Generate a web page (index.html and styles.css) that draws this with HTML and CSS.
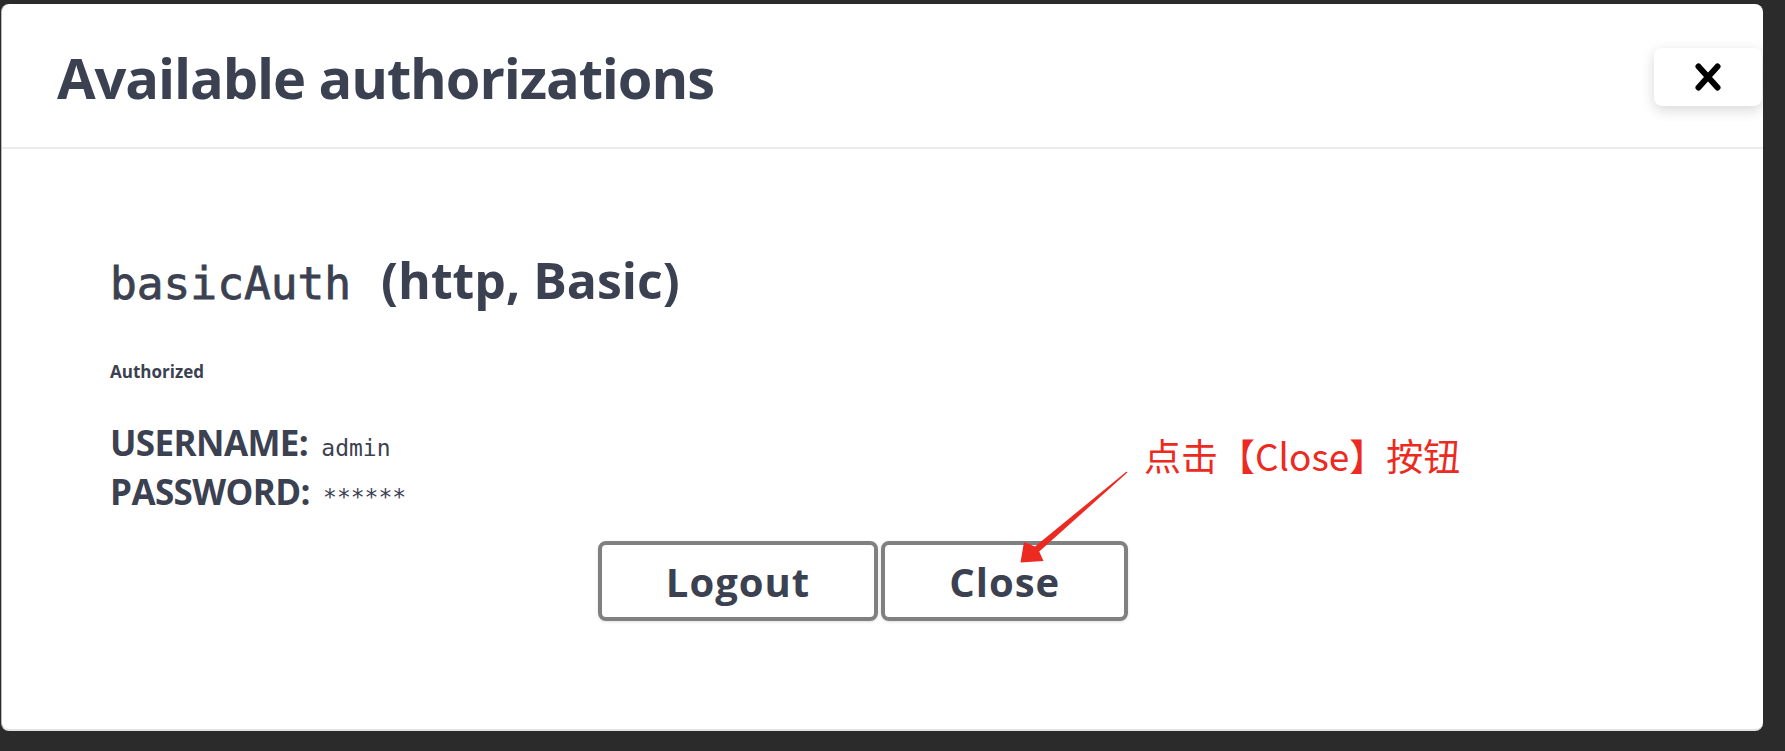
FILE: index.html
```html
<!DOCTYPE html>
<html lang="zh-CN">
<head>
<meta charset="utf-8">
<title>Available authorizations</title>
<link rel="stylesheet" href="styles.css">
</head>
<body>
<div class="backdrop">
  <div class="modal">
    <div class="modal-header">
      <h3 class="modal-title">Available authorizations</h3>
      <button class="close-x" type="button" aria-label="Close">
        <svg width="28" height="30" viewBox="0 0 28 30">
          <path d="M4.5 4.5 L23.5 25.5 M23.5 4.5 L4.5 25.5" stroke="#000" stroke-width="6" stroke-linecap="round" fill="none"/>
        </svg>
      </button>
    </div>
    <div class="modal-body">
      <h4 class="auth-title"><code class="scheme">basicAuth</code> (http, Basic)</h4>
      <h6 class="status">Authorized</h6>
      <div class="cred-row"><span class="label">USERNAME:</span> <code class="value">admin</code></div>
      <div class="cred-row"><span class="label">PASSWORD:</span> <code class="value">******</code></div>
      <div class="btn-wrapper">
        <button class="btn" type="button">Logout</button>
        <button class="btn" type="button">Close</button>
      </div>
    </div>
    <div class="note">点击【Close】按钮</div>
    <svg class="arrow" width="150" height="120" viewBox="1000 460 150 120">
      <polygon fill="#ec2a22" points="1126.4,472.6 1038.2,551.6 1042.5,561 1019.5,562.5 1023,542 1034,546.6 1125.6,471.4"/>
    </svg>
  </div>
</div>
</body>
</html>
```

FILE: styles.css
```css
* {
  box-sizing: border-box;
}

html, body {
  margin: 0;
  padding: 0;
  background: #2b2b2b;
}

body {
  font-family: "Open Sans", "Noto Sans", sans-serif;
  color: #3b4151;
}

.backdrop {
  padding: 4px 22px 20px 1px;
}

.modal {
  position: relative;
  width: 1762px;
  height: 727px;
  background: #fff;
  border-radius: 8px;
  border-left: 1px solid #b8b8b8;
  border-bottom: 2px solid #e2e2e2;
  overflow: hidden;
}

.modal-header {
  display: flex;
  justify-content: space-between;
  align-items: flex-start;
  height: 145px;
  padding: 44px 1px 0 55px;
  border-bottom: 2px solid #ebebeb;
}

.modal-title {
  margin: 0;
  font-size: 56px;
  line-height: 58px;
  font-weight: 700;
  letter-spacing: -1.1px;
  color: #3b4151;
}

.close-x {
  width: 108px;
  height: 58px;
  border: none;
  border-radius: 8px;
  background: #fff;
  box-shadow: 0 4px 14px rgba(0, 0, 0, 0.16);
  display: flex;
  align-items: center;
  justify-content: center;
  padding: 0;
}

.modal-body {
  padding: 0 0 0 108px;
}

.auth-title {
  margin: 101px 0 0;
  font-size: 50px;
  line-height: 60px;
  font-weight: 700;
  white-space: nowrap;
}

.scheme {
  font-family: "DejaVu Sans Mono", "Liberation Mono", monospace;
  font-size: 44.5px;
  line-height: 1;
  font-weight: 400;
  -webkit-text-stroke: 0.8px #3b4151;
  margin-right: 17px;
}

.status {
  margin: 50px 0 0;
  font-size: 17px;
  line-height: 24px;
  font-weight: 700;
}

.cred-row {
  font-size: 35px;
  line-height: 49px;
  font-weight: 700;
  white-space: nowrap;
}

.status + .cred-row {
  margin-top: 34px;
}

.label {
  letter-spacing: -0.6px;
}

.value {
  font-family: "DejaVu Sans Mono", "Liberation Mono", monospace;
  font-size: 23px;
  line-height: 1;
  font-weight: 400;
  margin-left: 4px;
}

.btn-wrapper {
  display: flex;
  justify-content: center;
  gap: 3px;
  margin-top: 25px;
  padding-right: 147px;
}

.btn {
  height: 80px;
  padding: 0 64px;
  border: 4px solid #808080;
  border-radius: 8px;
  background: #fff;
  box-shadow: 0 1px 3px rgba(0, 0, 0, 0.12);
  font-family: "Open Sans", "Noto Sans", sans-serif;
  font-size: 40px;
  font-weight: 700;
  letter-spacing: 1px;
  color: #3b4151;
}

.note {
  position: absolute;
  left: 1142px;
  top: 429px;
  font-family: "Noto Sans CJK SC", "Noto Sans", sans-serif;
  font-size: 37px;
  line-height: 44px;
  color: #ec2a22;
  white-space: nowrap;
}

.arrow {
  position: absolute;
  left: 999px;
  top: 456px;
}
```
